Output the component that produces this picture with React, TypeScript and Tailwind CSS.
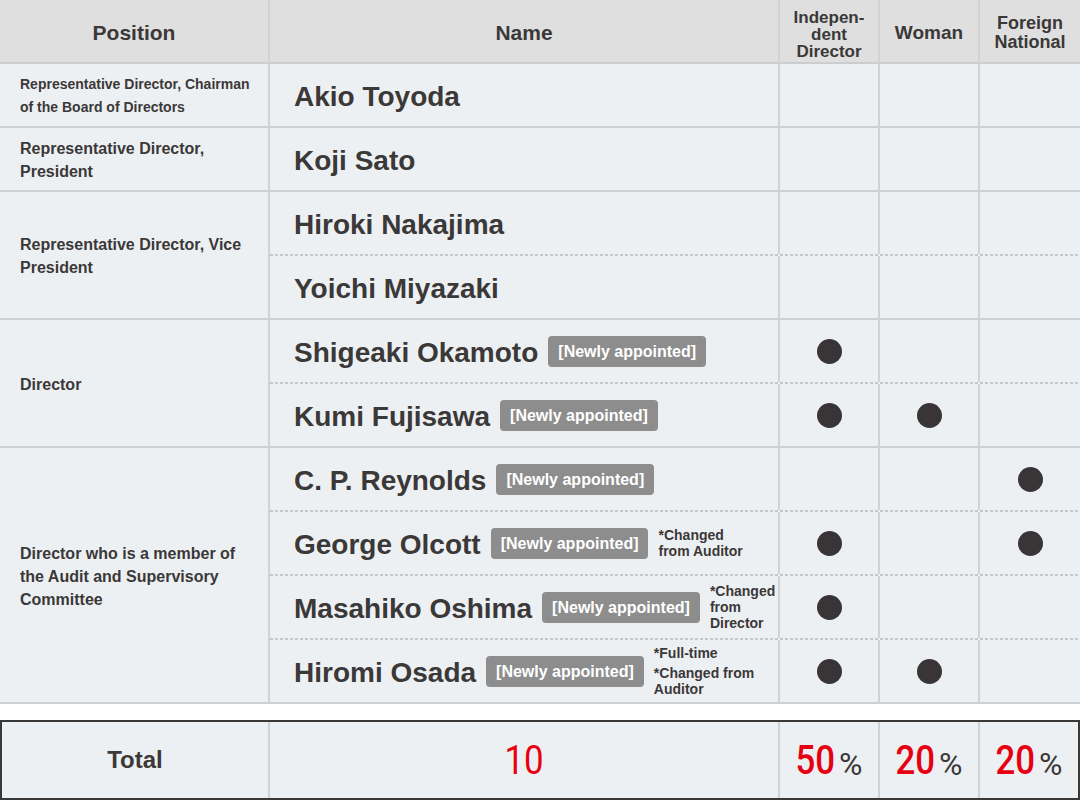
import React from 'react';

type Member = {
  name: string;
  isNew?: boolean;
  independent?: boolean;
  woman?: boolean;
  foreign?: boolean;
  notes?: string[][];
};

type Group = {
  position: string;
  small?: boolean;
  members: Member[];
};

const groups: Group[] = [
  {
    position: 'Representative Director, Chairman of the Board of Directors',
    small: true,
    members: [{ name: 'Akio Toyoda' }],
  },
  {
    position: 'Representative Director, President',
    members: [{ name: 'Koji Sato' }],
  },
  {
    position: 'Representative Director, Vice President',
    members: [{ name: 'Hiroki Nakajima' }, { name: 'Yoichi Miyazaki' }],
  },
  {
    position: 'Director',
    members: [
      { name: 'Shigeaki Okamoto', isNew: true, independent: true },
      { name: 'Kumi Fujisawa', isNew: true, independent: true, woman: true },
    ],
  },
  {
    position: 'Director who is a member of the Audit and Supervisory Committee',
    members: [
      { name: 'C. P. Reynolds', isNew: true, foreign: true },
      { name: 'George Olcott', isNew: true, independent: true, foreign: true, notes: [['*Changed', 'from Auditor']] },
      { name: 'Masahiko Oshima', isNew: true, independent: true, notes: [['*Changed', 'from', 'Director']] },
      { name: 'Hiromi Osada', isNew: true, independent: true, woman: true, notes: [['*Full-time'], ['*Changed from', 'Auditor']] },
    ],
  },
];

const Dot = ({ on }: { on?: boolean }) =>
  on ? <span className="block size-[25px] rounded-full bg-[#393536]" /> : null;

const MemberRow = ({ m }: { m: Member }) => (
  <div className="flex h-[62px]">
    <div className="flex w-[510px] items-center gap-[10px] border-r-2 border-[#cfd3d6] pl-6">
      <span className="whitespace-nowrap pt-1 text-[28px] font-bold">{m.name}</span>
      {m.isNew && (
        <span className="whitespace-nowrap rounded-[4px] bg-[#8d8d8d] px-[10px] py-[5px] text-[16px] leading-[21px] font-bold text-white">
          [Newly appointed]
        </span>
      )}
      {m.notes && (
        <div className="flex flex-col gap-1 text-[14px] leading-4 font-bold">
          {m.notes.map((lines, i) => (
            <p key={i} className="whitespace-nowrap">
              {lines.map((l, j) => (
                <React.Fragment key={j}>
                  {j > 0 && <br />}
                  {l}
                </React.Fragment>
              ))}
            </p>
          ))}
        </div>
      )}
    </div>
    <div className="flex w-[100px] items-center justify-center border-r-2 border-[#cfd3d6]">
      <Dot on={m.independent} />
    </div>
    <div className="flex w-[100px] items-center justify-center border-r-2 border-[#cfd3d6]">
      <Dot on={m.woman} />
    </div>
    <div className="flex w-[100px] items-center justify-center">
      <Dot on={m.foreign} />
    </div>
  </div>
);

const Dashed = () => (
  <div className="h-[2px] bg-[repeating-linear-gradient(90deg,#c4c8cc_0px,#c4c8cc_3px,transparent_3px,transparent_5px)]" />
);

export default function App() {
  return (
    <div className="w-[1080px] bg-white font-['Liberation_Sans',Arial,sans-serif] text-[#3b3838]">
      {/* header */}
      <div className="flex h-16 border-b-2 border-[#cbced1] bg-[#dfdfdf] font-bold">
        <div className="flex w-[270px] items-center justify-center border-r-2 border-[#d2d2d2] pt-1 text-[21px]">
          Position
        </div>
        <div className="flex w-[510px] items-center justify-center border-r-2 border-[#d2d2d2] pt-1 text-[21px]">
          Name
        </div>
        <div className="flex w-[100px] items-center justify-center border-r-2 border-[#d2d2d2] pt-[6px] text-center text-[17px] leading-[17px]">
          Indepen-
          <br />
          dent
          <br />
          Director
        </div>
        <div className="flex w-[100px] items-center justify-center border-r-2 border-[#d2d2d2] pt-1 text-[19px]">
          Woman
        </div>
        <div className="flex w-[100px] items-center justify-center pt-1 text-center text-[18px] leading-[19px]">
          Foreign
          <br />
          National
        </div>
      </div>

      {/* body */}
      {groups.map((g) => (
        <div key={g.position} className="flex border-b-2 border-[#cdd1d4] bg-[#edf0f3]">
          <div
            className={`flex w-[270px] shrink-0 items-center border-r-2 border-[#cfd3d6] pt-0.5 pr-4 pl-5 leading-[23px] font-bold ${
              g.small ? 'text-[14px]' : 'text-[16px]'
            }`}
          >
            {g.position}
          </div>
          <div className="flex flex-1 flex-col">
            {g.members.map((m, i) => (
              <React.Fragment key={m.name}>
                {i > 0 && <Dashed />}
                <MemberRow m={m} />
              </React.Fragment>
            ))}
          </div>
        </div>
      ))}

      {/* total */}
      <div className="mt-4 flex h-20 border-2 border-[#3b3838] bg-[#edf0f3]">
        <div className="flex w-[268px] items-center justify-center border-r-2 border-[#cfd3d6] text-[24px] font-bold">
          Total
        </div>
        <div className="flex w-[510px] items-center justify-center border-r-2 border-[#cfd3d6] font-['Roboto',sans-serif]">
          <span className="inline-block scale-x-[0.85] text-[41px] leading-none text-[#e60012]">10</span>
        </div>
        {['50', '20', '20'].map((v, i) => (
          <div
            key={i}
            className={`flex items-center justify-center font-['Roboto',sans-serif] ${
              i < 2 ? 'w-[100px] border-r-2 border-[#cfd3d6]' : 'flex-1'
            }`}
          >
            <span className="-mx-[3px] inline-block scale-x-[0.85] text-[41px] leading-none font-medium text-[#e60012]">
              {v}
            </span>
            <span className="mt-2 ml-[3px] text-[32px] leading-none">%</span>
          </div>
        ))}
      </div>
    </div>
  );
}
